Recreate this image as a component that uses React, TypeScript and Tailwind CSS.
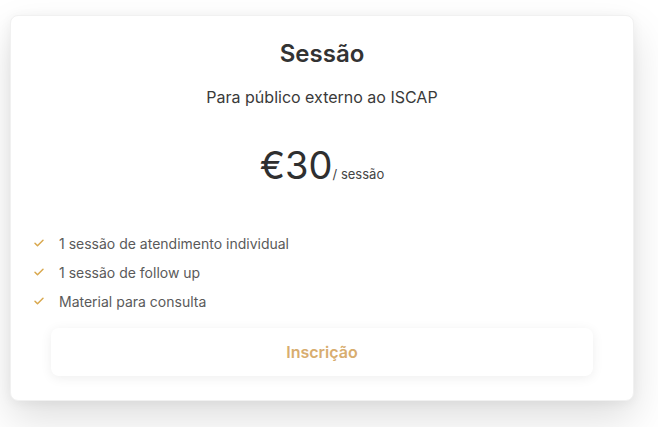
import React from "react";

const Check = () => (
  <svg width="12" height="12" viewBox="0 0 24 24" fill="none" stroke="#d9a84e" strokeWidth="3" strokeLinecap="round" strokeLinejoin="round">
    <path d="M4 12.5l5 5L20 6.5" />
  </svg>
);

export default function App() {
  const items = ["1 sessão de atendimento individual", "1 sessão de follow up", "Material para consulta"];
  return (
    <div className="w-[658px] h-[427px] bg-white pt-[15px] pl-[10px]" style={{ fontFamily: "Inter, 'Noto Sans', sans-serif" }}>
      <div className="w-[624px] h-[386px] bg-white rounded-[8px] border border-[#f1f1f1] shadow-[0_18px_40px_rgba(0,0,0,0.13),0_2px_12px_rgba(0,0,0,0.05)] flex flex-col">
        <h2 className="mt-[22px] text-center text-[24px] leading-[32px] font-semibold text-[#333333]">Sessão</h2>
        <p className="mt-[15px] text-center text-[16px] leading-[24px] text-[#3a3a3a]">Para público externo ao ISCAP</p>
        <div className="mt-[32px] flex items-baseline justify-center text-[#2f2f2f]">
          <span className="text-[38px] leading-[48px]">€30</span>
          <span className="text-[13px] text-[#444]">/ sessão</span>
        </div>
        <ul className="mt-[44px] pl-[22px] flex flex-col gap-[9px]">
          {items.map((t) => (
            <li key={t} className="flex items-center h-[20px] text-[14px] text-[#5a5a5a]">
              <Check />
              <span className="ml-[14px]">{t}</span>
            </li>
          ))}
        </ul>
        <div className="mt-[17px] mx-[40px] h-[48px] rounded-[8px] bg-white shadow-[0_2px_12px_rgba(0,0,0,0.07)] flex items-center justify-center text-[16px] font-semibold text-[#d8ad6f]">
          Inscrição
        </div>
      </div>
    </div>
  );
}
